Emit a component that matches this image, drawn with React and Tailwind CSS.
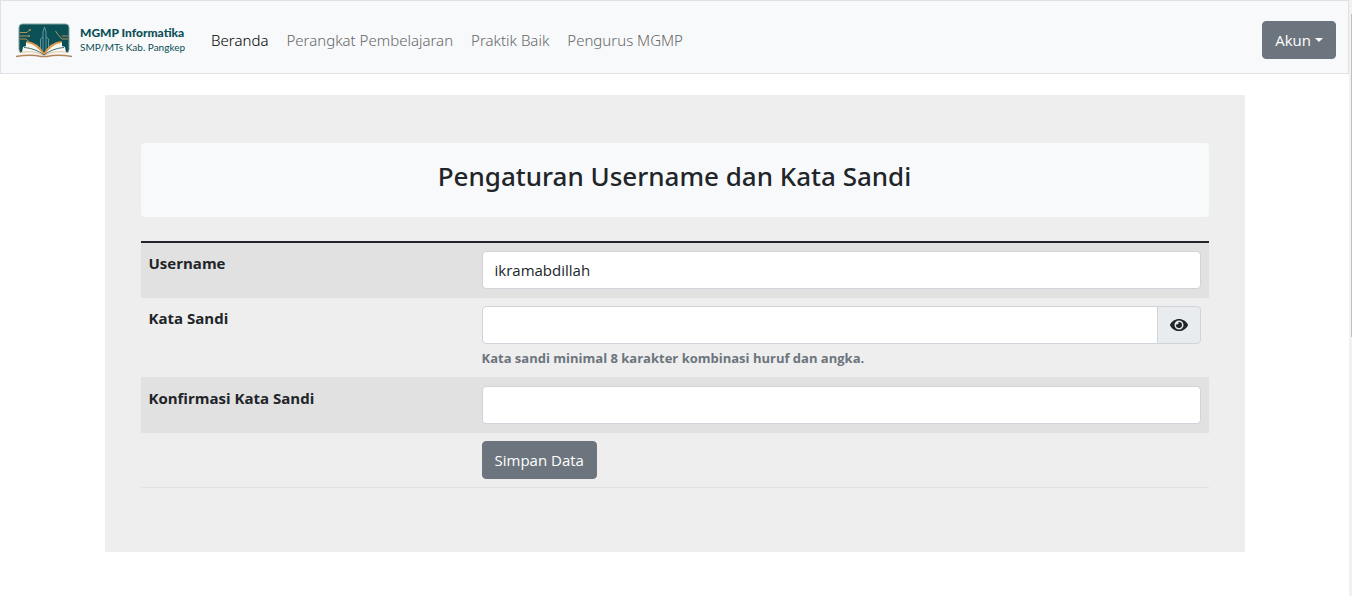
import { useState } from "react";
import { FaEye } from "react-icons/fa";

const navLinks = [
  { label: "Beranda", active: true },
  { label: "Perangkat Pembelajaran" },
  { label: "Praktik Baik" },
  { label: "Pengurus MGMP" },
];

function Logo() {
  return (
    <svg viewBox="0 0 56 36" className="mt-0.5 h-9 w-14 shrink-0" aria-hidden="true">
      <rect x="3" y="1" width="50" height="29" rx="3.5" fill="#0b4f57" stroke="#7fa59b" strokeWidth="1" />
      <g fill="none" stroke="#c99a55" strokeWidth="0.9">
        <path d="M4 9.500h7l2.500-2.500M4 13h8M4 16h6l3 2.500M46 13h6M52 16h-6l-4-4.500-2.500-3.500" />
      </g>
      <circle cx="14" cy="7" r="0.900" fill="#c99a55" />
      <circle cx="13" cy="13" r="0.900" fill="#c99a55" />
      <g fill="none" stroke="#6b9fa4" strokeWidth="0.900">
        <path d="M27 28V9l1.500-5L30 9v19M24.500 27V16l2.500-2M32.500 27V16L30 14" />
      </g>
      <path d="M28 32C22 23 16 20 10 19v4l-3 1-1 5-5 4c9-2.500 19-2.500 27 0 8-2.500 18-2.500 27 0l-5-4-1-5-3-1v-4c-6 1-12 4-18 13z" fill="#f8f7f2" />
      <path d="M28 31.500C23 23 17 19.500 10.500 19M28 31.500C33 23 39 19.500 45.500 19" fill="none" stroke="#e39b4c" strokeWidth="1.800" />
      <path d="M28 32C22 27.500 15 25 8 24.500M28 32c6-4.500 13-7 20-7.500" fill="none" stroke="#315d5d" strokeWidth="0.900" />
      <path d="M27.500 32.500C20 28.500 13 28 5 29.500M28.500 32.500c7.500-4 15-4.500 23-3" fill="none" stroke="#d9b98d" strokeWidth="0.800" />
      <path d="M0 33.500c9-1.500 19-1.500 25 0h6c6-1.500 16-1.500 25 0" fill="none" stroke="#b3875c" strokeWidth="1.500" />
    </svg>
  );
}

function Row({ id, label, striped, children }) {
  return (
    <tr className={striped ? "bg-[#e1e1e1]" : ""}>
      <th scope="row" className="w-[333px] border-t border-[#dee2e6] p-2 text-left align-top text-[15px] leading-6 font-bold">
        {label && <label htmlFor={id}>{label}</label>}
      </th>
      <td className="border-t border-[#dee2e6] p-2 align-top">{children}</td>
    </tr>
  );
}

const field =
  "block h-[38px] w-full min-w-0 border border-[#ced4da] bg-white px-3 text-[15px] leading-6 text-[#212529] outline-none focus:border-[#80bdff]";

export default function App() {
  const [visible, setVisible] = useState(false);
  return (
    <div className="flex min-h-screen bg-white font-['Open_Sans','Noto_Sans',sans-serif] text-[15px] leading-6 text-[#212529]">
      <div className="min-w-0 flex-1">
        <nav className="flex items-center border border-[#dee2e6] bg-[#f8f9fa] px-3 pt-[11px] pb-[5px]">
          <a href="#beranda" className="mr-[26px] ml-[3px] flex h-14 items-center gap-2" aria-label="MGMP Informatika">
            <Logo />
            <span className="flex flex-col whitespace-nowrap text-[#0b4f57]">
              <span className="font-['Lato',sans-serif] text-[12px] leading-[14px] font-black">MGMP Informatika</span>
              <span className="font-['Lato',sans-serif] text-[10px] leading-[14px]">SMP/MTs Kab. Pangkep</span>
            </span>
          </a>
          <ul className="flex flex-1 gap-[18px] font-['Noto_Sans',sans-serif] font-light">
            {navLinks.map((l) => (
              <li key={l.label}>
                <a href="#menu" className={l.active ? "text-black" : "text-[#666768]"}>{l.label}</a>
              </li>
            ))}
          </ul>
          <button type="button" className="flex h-[38px] items-center gap-1 rounded border border-[#6c757d] bg-[#6c757d] px-3 text-white">
            Akun
            <svg viewBox="0 0 10 5" className="h-1 w-2" aria-hidden="true">
              <path d="M0 0h10L5 5z" fill="currentColor" />
            </svg>
          </button>
        </nav>

        <main className="mx-auto mt-[21px] max-w-[1140px] bg-[#eeeeee] px-9 pt-12 pb-16">
          <h1 className="mb-6 rounded bg-[#f8f9fa] pt-4 pb-6 text-center font-['Noto_Sans',sans-serif] text-[26px] leading-[34px] font-medium">
            Pengaturan Username dan Kata Sandi
          </h1>
          <form onSubmit={(e) => e.preventDefault()}>
            <table className="w-full border-separate border-spacing-0 border-t border-b border-t-[#212529] border-b-[#dee2e6] [&_tr:first-child>*]:border-[#212529]">
              <tbody>
                <Row id="username" label="Username" striped>
                  <input id="username" type="text" defaultValue="ikramabdillah" className={`${field} rounded`} />
                </Row>
                <Row id="password" label="Kata Sandi">
                  <div className="flex">
                    <input id="password" type={visible ? "text" : "password"} className={`${field} flex-1 rounded-l`} />
                    <button
                      type="button"
                      aria-label="Tampilkan kata sandi"
                      onClick={() => setVisible(!visible)}
                      className="-ml-px flex h-[38px] w-11 items-center justify-center rounded-r border border-[#ced4da] bg-[#e9ecef]"
                    >
                      <FaEye className="h-4 w-[18px]" />
                    </button>
                  </div>
                  <p className="mt-1 text-[13px] leading-[21px] font-bold text-[#6c757d]">
                    Kata sandi minimal 8 karakter kombinasi huruf dan angka.
                  </p>
                </Row>
                <Row id="confirm" label="Konfirmasi Kata Sandi" striped>
                  <input id="confirm" type="password" className={`${field} rounded`} />
                </Row>
                <Row>
                  <button type="submit" className="block h-[38px] rounded border border-[#6c757d] bg-[#6c757d] px-3 text-white">Simpan Data</button>
                </Row>
              </tbody>
            </table>
          </form>
        </main>
      </div>
      <div className="flex w-[3px] shrink-0 justify-end bg-[#f1f1f1] pt-3.5" aria-hidden="true">
        <div className="h-[323px] w-px bg-[#c1c1c1]" />
      </div>
    </div>
  );
}
